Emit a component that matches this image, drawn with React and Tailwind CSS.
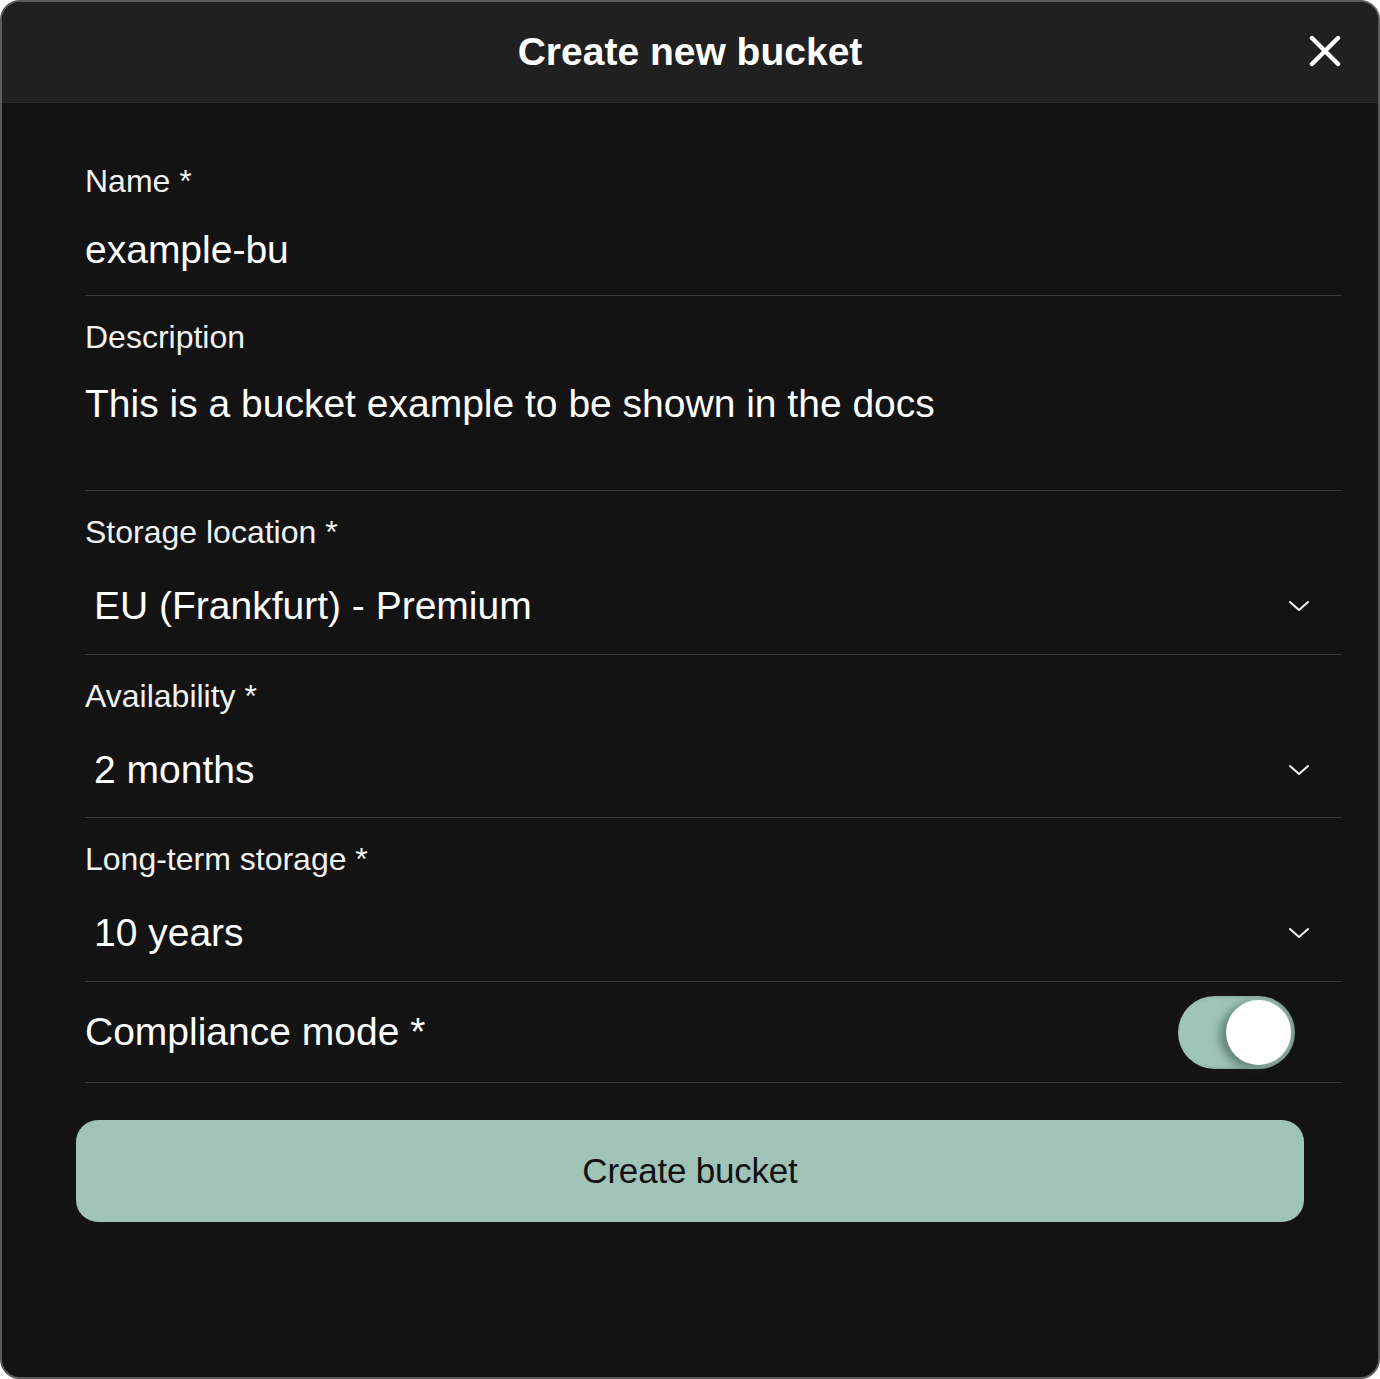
import { useState } from 'react'

const font = { fontFamily: '"Liberation Sans", Arial, sans-serif' }

function Chevron() {
  return (
    <svg width="22" height="12" viewBox="0 0 22 12" fill="none" className="shrink-0">
      <polyline points="2,2 11,10 20,2" stroke="#f2f2f2" strokeWidth="2" strokeLinecap="round" strokeLinejoin="round" />
    </svg>
  )
}

function SelectField({ label, value, tight }) {
  return (
    <div className={tight ? 'border-b border-[#3a3a3a] pt-[23px] pb-[25px]' : 'border-b border-[#3a3a3a] pt-[23px] pb-[26px]'}>
      <div className="text-[32px] leading-[36px] text-[#f2f2f2]">{label}</div>
      <div className="mt-[34px] flex items-center justify-between pl-[9px] pr-[31px]">
        <span className="text-[39px] leading-[44px] text-white">{value}</span>
        <Chevron />
      </div>
    </div>
  )
}

export default function App() {
  const [compliance, setCompliance] = useState(true)

  return (
    <div className="min-h-screen bg-white" style={font}>
      <div className="h-[1379px] w-[1380px] overflow-hidden rounded-[20px] border-2 border-[#5a5a5a] bg-[#131313] flex flex-col">
        {/* header */}
        <div className="relative h-[101px] shrink-0 border-b border-[#2a2a2a] bg-[#202020] flex items-center justify-center">
          <h1 className="text-[39px] leading-[44px] font-bold text-white -mt-[1px]">Create new bucket</h1>
          <button className="absolute right-[37px] top-[33px] p-0">
            <svg width="32" height="32" viewBox="0 0 32 32" fill="none">
              <path d="M3 3 L29 29 M29 3 L3 29" stroke="#fff" strokeWidth="4.4" strokeLinecap="round" />
            </svg>
          </button>
        </div>

        <div className="ml-[83px] mr-[37px]">
          {/* name */}
          <div className="border-b border-[#3a3a3a] pt-[60px] pb-[23px]">
            <div className="text-[32px] leading-[36px] text-[#f2f2f2]">Name *</div>
            <div className="mt-[29px] text-[39px] leading-[44px] text-white">example-bu</div>
          </div>

          {/* description */}
          <div className="border-b border-[#3a3a3a] pt-[23px] pb-[64px]">
            <div className="text-[32px] leading-[36px] text-[#f2f2f2]">Description</div>
            <div className="mt-[27px] text-[39px] leading-[44px] text-white">This is a bucket example to be shown in the docs</div>
          </div>

          <SelectField label="Storage location *" value="EU (Frankfurt) - Premium" />
          <SelectField label="Availability *" value="2 months" tight />
          <SelectField label="Long-term storage *" value="10 years" />

          {/* compliance */}
          <div className="h-[101px] border-b border-[#3a3a3a] flex items-center justify-between pr-[46px]">
            <span className="text-[39px] leading-[44px] text-white">Compliance mode *</span>
            <button
              onClick={() => setCompliance(!compliance)}
              className="relative h-[73px] w-[117px] rounded-full bg-[#9fc4b8] shadow-[inset_-3px_0_4px_rgba(0,0,0,0.25)]"
            >
              <span
                className={
                  compliance
                    ? 'absolute right-[4px] top-[4px] h-[65px] w-[65px] rounded-full bg-white shadow-[-6px_3px_10px_rgba(40,70,60,0.55)]'
                    : 'absolute left-[4px] top-[4px] h-[65px] w-[65px] rounded-full bg-white shadow-[6px_3px_10px_rgba(40,70,60,0.55)]'
                }
              />
            </button>
          </div>
        </div>

        <div className="pl-[74px] pr-[74px] pt-[37px]">
          <button className="h-[102px] w-full rounded-[22px] bg-[#9fc3b7] text-[35px] text-[#111] tracking-[-0.2px]">
            Create bucket
          </button>
        </div>
      </div>
    </div>
  )
}
